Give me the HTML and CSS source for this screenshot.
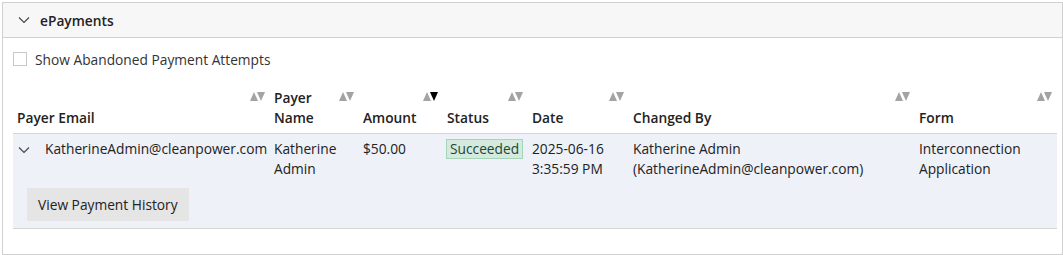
FILE: index.html
```html
<!DOCTYPE html>
<html>
<head>
<meta charset="utf-8">
<link rel="stylesheet" href="styles.css">
</head>
<body>
<section class="panel">
  <div class="panel-head">
    <svg class="chev" width="12" height="8" viewBox="0 0 12 8"><path d="M1 1.5 L6 6.5 L11 1.5" fill="none" stroke="#444" stroke-width="1.1"/></svg>
    <span class="panel-title">ePayments</span>
  </div>
  <div class="panel-body">
    <label class="check-row"><span class="checkbox"></span><span>Show Abandoned Payment Attempts</span></label>
    <table class="grid">
      <colgroup>
        <col style="width:257px"><col style="width:89px"><col style="width:84px"><col style="width:85px"><col style="width:101px"><col style="width:286px"><col style="width:142px">
      </colgroup>
      <thead>
        <tr>
          <th><div class="th"><span class="lbl">Payer Email</span><span class="sort"><i class="up"></i><i class="dn"></i></span></div></th>
          <th><div class="th"><span class="lbl">Payer<br>Name</span><span class="sort"><i class="up"></i><i class="dn"></i></span></div></th>
          <th><div class="th"><span class="lbl">Amount</span><span class="sort"><i class="up"></i><i class="dn active"></i></span></div></th>
          <th><div class="th"><span class="lbl">Status</span><span class="sort"><i class="up"></i><i class="dn"></i></span></div></th>
          <th><div class="th"><span class="lbl">Date</span><span class="sort"><i class="up"></i><i class="dn"></i></span></div></th>
          <th><div class="th"><span class="lbl">Changed By</span><span class="sort"><i class="up"></i><i class="dn"></i></span></div></th>
          <th><div class="th"><span class="lbl">Form</span><span class="sort"><i class="up"></i><i class="dn"></i></span></div></th>
        </tr>
      </thead>
      <tbody>
        <tr class="row">
          <td><div class="first"><svg class="rowchev" width="12" height="8" viewBox="0 0 12 8"><path d="M1 1.5 L6 6.5 L11 1.5" fill="none" stroke="#444" stroke-width="1.1"/></svg><span>KatherineAdmin@cleanpower.com</span></div></td>
          <td>Katherine<br>Admin</td>
          <td>$50.00</td>
          <td><span class="badge">Succeeded</span></td>
          <td>2025-06-16<br>3:35:59 PM</td>
          <td>Katherine Admin<br>(KatherineAdmin@cleanpower.com)</td>
          <td>Interconnection<br>Application</td>
        </tr>
        <tr class="row detail">
          <td colspan="7"><button class="btn">View Payment History</button></td>
        </tr>
      </tbody>
    </table>
  </div>
</section>
</body>
</html>
```

FILE: styles.css
```css
html, body { margin: 0; padding: 0; background: #fff; }
body {
  font-family: "Open Sans", "Noto Sans", sans-serif;
  font-size: 13.75px;
  color: #222;
  padding: 2px 0 0 2px;
}
.panel {
  width: 1059px;
  height: 251px;
  border: 1px solid #d0d0d0;
  box-sizing: content-box;
}
.panel-head {
  height: 34px;
  background: #f7f7f7;
  border-bottom: 1px solid #d0d0d0;
  display: flex;
  align-items: center;
  padding-left: 15px;
}
.chev { margin-right: 10px; }
.panel-title { font-weight: 600; color: #222; }
.panel-body { padding: 0 4px 0 10px; }
.check-row {
  display: flex;
  align-items: center;
  height: 20px;
  margin-top: 11px;
  color: #333;
}
.checkbox {
  width: 12px; height: 12px;
  border: 1px solid #c8c8c8;
  background: #fff;
  margin-right: 8px;
}
.grid {
  border-collapse: collapse;
  table-layout: fixed;
  width: 1044px;
  margin-top: 19px;
}
.grid th {
  text-align: left;
  font-weight: 600;
  vertical-align: bottom;
  padding: 0;
  border-bottom: 1px solid #d4d4d4;
}
.th {
  display: flex;
  align-items: flex-end;
  padding: 0 5px 5px 4px;
  line-height: 20px;
  position: relative;
  min-height: 40px;
}
.sort {
  position: absolute;
  top: 4px;
  right: 5px;
  display: flex;
}
.sort i {
  display: block;
  width: 0; height: 0;
  border-left: 4.5px solid transparent;
  border-right: 4.5px solid transparent;
}
.sort .up { border-bottom: 9px solid #a3a3a3; margin-right: -1px; }
.sort .dn { border-top: 9px solid #a3a3a3; }
.sort .dn.active { border-top-color: #000; }
.row td {
  background: #eef1f8;
  vertical-align: top;
  padding: 5px 4px 0 4px;
  line-height: 20px;
}
.first { display: flex; align-items: flex-start; }
.rowchev { margin: 7px 15px 0 1px; flex: none; }
.badge {
  display: inline-block;
  background: #d3eadc;
  border: 1px solid #a8d3bb;
  color: #1f4536;
  padding: 0 3px;
  line-height: 18px;
  margin-left: -1px;
  margin-top: -2px;
}
.detail td {
  padding: 9px 14px 7px 14px;
  border-bottom: 1px solid #d4d4d4;
}
.btn {
  display: block;
  font-family: inherit;
  font-size: 13.75px;
  color: #222;
  background: #e5e5e5;
  border: none;
  height: 33px;
  padding: 0 11px;
  cursor: pointer;
}
```
